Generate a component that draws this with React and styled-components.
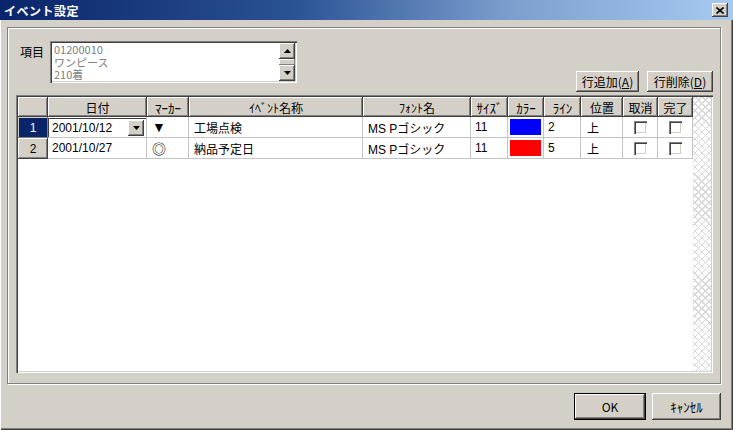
import React from 'react';
import styled, { createGlobalStyle, css } from 'styled-components';

const GlobalStyle = createGlobalStyle`
  html, body {
    margin: 0;
    padding: 0;
    background: #d4d0c8;
  }
  * {
    box-sizing: border-box;
  }
`;

const uiFont = `"Liberation Sans", "Noto Sans CJK JP", sans-serif`;

const raised = css`
  box-shadow: inset -1px -1px #404040, inset 1px 1px #ffffff,
    inset -2px -2px #808080, inset 2px 2px #d4d0c8;
`;

const sunken = css`
  box-shadow: inset 1px 1px #808080, inset 2px 2px #404040,
    inset -1px -1px #ffffff, inset -2px -2px #d4d0c8;
`;

const rows = [
  {
    no: 1,
    date: '2001/10/12',
    marker: '▼',
    name: '工場点検',
    font: 'MS Pゴシック',
    size: '11',
    color: '#0000ff',
    line: '2',
    pos: '上',
    selected: true,
  },
  {
    no: 2,
    date: '2001/10/27',
    marker: '◎',
    name: '納品予定日',
    font: 'MS Pゴシック',
    size: '11',
    color: '#ff0000',
    line: '5',
    pos: '上',
  },
];

const headers = ['', '日付', 'ﾏｰｶｰ', 'ｲﾍﾞﾝﾄ名称', 'ﾌｫﾝﾄ名', 'ｻｲｽﾞ', 'ｶﾗｰ', 'ﾗｲﾝ', '位置', '取消', '完了'];

const Window = styled.div`
  display: flex;
  flex-direction: column;
  width: 733px;
  height: 430px;
  font-family: ${uiFont};
  font-size: 12px;
  color: #000;
  background: #d4d0c8;
`;

const TitleBar = styled.div`
  display: flex;
  align-items: center;
  justify-content: space-between;
  height: 20px;
  padding: 0 5px 0 4px;
  background: linear-gradient(to right, #0a246a 0%, #2a5394 40%, #7d9fcf 70%, #a6caf0 100%);
`;

const Title = styled.span`
  color: #ffffff;
  font-weight: bold;
  font-size: 12px;
  font-family: "Noto Sans CJK JP", sans-serif;
  letter-spacing: 0.5px;
`;

const CloseButton = styled.div`
  display: flex;
  align-items: center;
  justify-content: center;
  width: 16px;
  height: 14px;
  background: #d4d0c8;
  ${raised};
`;

const Body = styled.div`
  flex: 1;
  display: flex;
  flex-direction: column;
  padding: 7px 12px 0 7px;
  box-shadow: inset 1px 0 #ffffff, inset -1px 0 #404040, inset -2px 0 #808080,
    inset 0 -1px #404040, inset 0 -2px #808080;
`;

const Panel = styled.div`
  display: flex;
  flex-direction: column;
  height: 357px;
  padding: 13px 7px 10px 8px;
  border: 1px solid #808080;
  box-shadow: inset 1px 1px #ffffff, 1px 1px #ffffff;
`;

const TopRow = styled.div`
  display: flex;
  align-items: flex-start;
  height: 50px;
`;

const FieldLabel = styled.span`
  width: 30px;
  margin: 2px 0 0 4px;
  font-family: "Noto Sans CJK JP", sans-serif;
`;

const ListBox = styled.div`
  display: flex;
  width: 247px;
  height: 42px;
  padding: 2px;
  background: #ffffff;
  ${sunken};
`;

const ListText = styled.div`
  flex: 1;
  padding: 0 0 0 2px;
  color: #808080;
  font-size: 11px;
  line-height: 12.5px;
  font-family: "Noto Sans CJK JP", sans-serif;
`;

const ScrollBar = styled.div`
  display: flex;
  flex-direction: column;
  width: 16px;
`;

const ScrollArrow = styled.div`
  display: flex;
  align-items: center;
  justify-content: center;
  height: 16px;
  background: #d4d0c8;
  ${raised};
`;

const ScrollThumb = styled.div`
  height: 6px;
  background: #d4d0c8;
  box-shadow: inset -1px -1px #808080, inset 1px 1px #ffffff;
`;

const RowActions = styled.div`
  display: flex;
  gap: 8px;
  margin: 30px 0 0 auto;
`;

const Button = styled.button`
  display: flex;
  align-items: center;
  justify-content: center;
  width: ${(p) => p.$w}px;
  height: ${(p) => p.$h || 21}px;
  padding: 0;
  border: none;
  background: #d4d0c8;
  font-family: "Noto Sans CJK JP", sans-serif;
  font-size: 12px;
  color: #000;
  ${(p) =>
    p.$default
      ? css`
          box-shadow: inset 0 0 0 1px #000000, inset -2px -2px #404040,
            inset 2px 2px #ffffff, inset -3px -3px #808080;
        `
      : raised};

  u {
    text-decoration: underline;
  }
`;

const GridFrame = styled.div`
  display: flex;
  flex: 1;
  margin-top: 4px;
  padding: 2px;
  background: #ffffff;
  ${sunken};
`;

const Table = styled.div`
  display: grid;
  grid-template-columns: 30px 99px 42px 174px 108px 37px 36px 37px 42px 35px 35px;
  grid-template-rows: 20px 21px 21px;
  align-content: start;
  background: #ffffff;
`;

const HeadCell = styled.div`
  display: flex;
  align-items: center;
  justify-content: center;
  background: #d4d0c8;
  font-family: "Noto Sans CJK JP", sans-serif;
  font-size: ${(p) => (p.$narrow ? 13 : 12)}px;
  white-space: nowrap;
  overflow: hidden;
  box-shadow: inset -1px -1px #404040, inset 1px 1px #ffffff, inset -2px -2px #808080;
`;

const RowHead = styled(HeadCell)`
  font-family: ${uiFont};
  font-size: 12px;
  ${(p) =>
    p.$selected &&
    css`
      background: #0a246a;
      color: #ffffff;
      box-shadow: inset -1px -1px #808080, inset 1px 1px #d4d0c8;
    `}
`;

const Cell = styled.div`
  display: flex;
  align-items: center;
  justify-content: ${(p) => (p.$center ? 'center' : 'flex-start')};
  padding: ${(p) => (p.$pad === undefined ? '0 0 0 4px' : p.$pad)};
  border-right: 1px solid #c4c4c4;
  border-bottom: 1px solid #c4c4c4;
  white-space: nowrap;
  overflow: hidden;
  font-family: ${(p) => (p.$jp ? '"Noto Sans CJK JP", sans-serif' : uiFont)};
  font-size: ${(p) => p.$size || 12}px;
`;

const Combo = styled.div`
  display: flex;
  align-items: center;
  width: 100%;
  height: 19px;
  padding: 1px 2px 1px 3px;
  border-top: 1px solid #404040;
  border-left: 1px solid #404040;
  background: #ffffff;
`;

const ComboText = styled.span`
  flex: 1;
`;

const ComboButton = styled.div`
  display: flex;
  align-items: center;
  justify-content: center;
  width: 16px;
  height: 16px;
  background: #d4d0c8;
  ${raised};
`;

const Swatch = styled.div`
  width: 100%;
  height: 100%;
  background: ${(p) => p.$color};
`;

const CheckBox = styled.div`
  width: 13px;
  height: 13px;
  background: #ffffff;
  box-shadow: inset 1px 1px #808080, inset 2px 2px #404040,
    inset -1px -1px #ffffff, inset -2px -2px #d4d0c8;
`;

const Hatch = styled.div`
  flex: 1;
  background-color: #ffffff;
  background-image: repeating-linear-gradient(45deg, #d8d8d8 0 1px, transparent 1px 5px),
    repeating-linear-gradient(-45deg, #d8d8d8 0 1px, transparent 1px 5px);
`;

const Footer = styled.div`
  display: flex;
  justify-content: flex-end;
  gap: 6px;
  margin-top: 9px;
`;

const CancelLabel = styled.span`
  font-size: 13px;
`;

const Tri = ({ up }) => (
  <svg width="7" height="4" viewBox="0 0 7 4">
    <path d={up ? 'M3.5 0 L7 4 L0 4 Z' : 'M0 0 L7 0 L3.5 4 Z'} fill="#000" />
  </svg>
);

export default function App() {
  return (
    <>
      <GlobalStyle />
      <Window>
        <TitleBar>
          <Title>イベント設定</Title>
          <CloseButton>
            <svg width="8" height="7" viewBox="0 0 8 7">
              <path d="M0.5 0.5 L7.5 6.5 M7.5 0.5 L0.5 6.5" stroke="#000" strokeWidth="1.6" />
            </svg>
          </CloseButton>
        </TitleBar>
        <Body>
          <Panel>
            <TopRow>
              <FieldLabel>項目</FieldLabel>
              <ListBox>
                <ListText>
                  <div>01200010</div>
                  <div>ワンピース</div>
                  <div>210着</div>
                </ListText>
                <ScrollBar>
                  <ScrollArrow>
                    <Tri up />
                  </ScrollArrow>
                  <ScrollThumb />
                  <ScrollArrow>
                    <Tri />
                  </ScrollArrow>
                </ScrollBar>
              </ListBox>
              <RowActions>
                <Button $w={63}>
                  行追加(<u>A</u>)
                </Button>
                <Button $w={66}>
                  行削除(<u>D</u>)
                </Button>
              </RowActions>
            </TopRow>
            <GridFrame>
              <Table>
                {headers.map((h, i) => (
                  <HeadCell key={i} $narrow={i === 2 || i === 5 || i === 6 || i === 7}>
                    {h}
                  </HeadCell>
                ))}
                {rows.map((r) => (
                  <React.Fragment key={r.no}>
                    <RowHead $selected={r.selected}>{r.no}</RowHead>
                    {r.selected ? (
                      <Cell $pad="0">
                        <Combo>
                          <ComboText>{r.date}</ComboText>
                          <ComboButton>
                            <Tri />
                          </ComboButton>
                        </Combo>
                      </Cell>
                    ) : (
                      <Cell>{r.date}</Cell>
                    )}
                    <Cell $pad="0 0 0 5px" $size={14}>
                      {r.marker}
                    </Cell>
                    <Cell $pad="0 0 0 5px" $jp>
                      {r.name}
                    </Cell>
                    <Cell $pad="0 0 0 5px">{r.font}</Cell>
                    <Cell>{r.size}</Cell>
                    <Cell $pad="2px">
                      <Swatch $color={r.color} />
                    </Cell>
                    <Cell>{r.line}</Cell>
                    <Cell $pad="0 0 0 6px" $jp>
                      {r.pos}
                    </Cell>
                    <Cell $center $pad="0">
                      <CheckBox />
                    </Cell>
                    <Cell $center $pad="0">
                      <CheckBox />
                    </Cell>
                  </React.Fragment>
                ))}
              </Table>
              <Hatch />
            </GridFrame>
          </Panel>
          <Footer>
            <Button $w={72} $h={27} $default>
              OK
            </Button>
            <Button $w={69} $h={27}>
              <CancelLabel>ｷｬﾝｾﾙ</CancelLabel>
            </Button>
          </Footer>
        </Body>
      </Window>
    </>
  );
}
